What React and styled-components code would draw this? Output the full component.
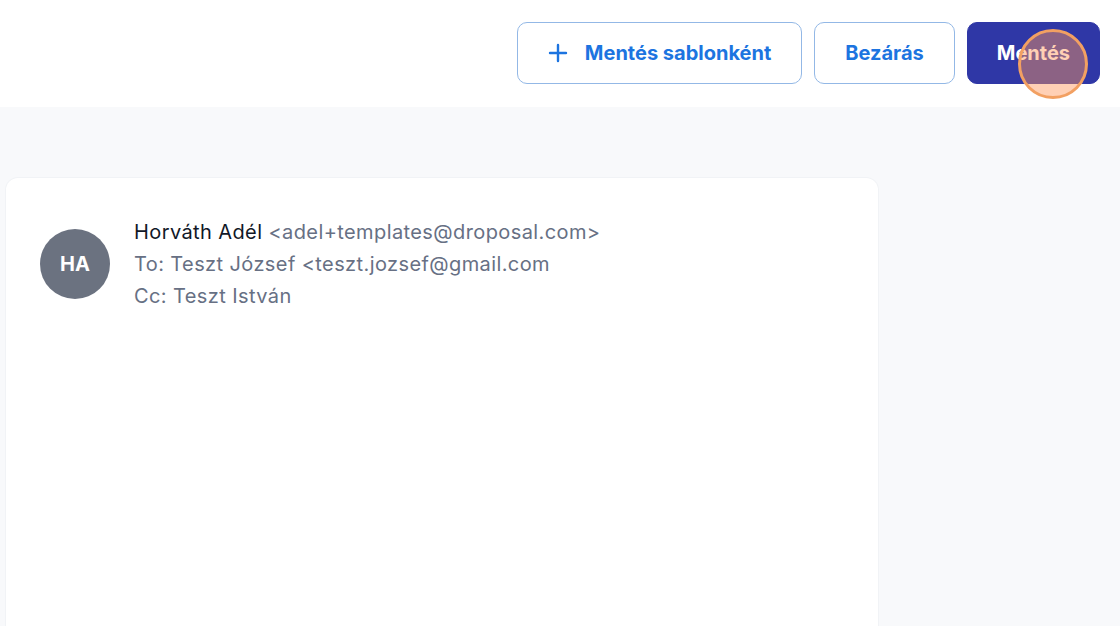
import styled, { createGlobalStyle, css } from "styled-components";

const GlobalStyle = createGlobalStyle`
  html, body {
    margin: 0;
    padding: 0;
    background: #f8f9fb;
    font-family: Inter, "Noto Sans", sans-serif;
    overflow: hidden;
  }
`;

const Page = styled.div`
  width: 1120px;
  height: 626px;
  display: flex;
  flex-direction: column;
  background: #f8f9fb;
  overflow: hidden;
`;

const Header = styled.header`
  height: 107px;
  flex-shrink: 0;
  background: #ffffff;
  display: flex;
  align-items: flex-start;
  justify-content: flex-end;
  gap: 12px;
  padding: 22px 20px 0 0;
  box-sizing: border-box;
`;

const outlined = css`
  background: #ffffff;
  color: #1c74e0;
  border: 1.5px solid #93b8e6;
`;

const filled = css`
  background: #2f37a6;
  color: #ffffff;
  border: 1.5px solid #2f37a6;
`;

const Button = styled.button`
  position: relative;
  height: 62px;
  box-sizing: border-box;
  padding: 0 ${(p) => p.$px || 29}px;
  border-radius: 10px;
  display: flex;
  align-items: center;
  gap: 17px;
  font-family: Inter, sans-serif;
  font-size: 20px;
  font-weight: 700;
  letter-spacing: 0;
  cursor: pointer;
  ${(p) => (p.$primary ? filled : outlined)}
`;

const Cursor = styled.span`
  position: absolute;
  left: 50px;
  top: 6px;
  width: 70px;
  height: 70px;
  border-radius: 50%;
  border: 3px solid #f2a062;
  background: rgba(255, 150, 90, 0.45);
  box-sizing: border-box;
  pointer-events: none;
`;

const Body = styled.main`
  flex: 1;
  padding: 71px 242px 0 6px;
`;

const Card = styled.section`
  height: 100%;
  background: #ffffff;
  border-radius: 12px 12px 0 0;
  box-shadow: 0 0 0 1px #f1f3f6;
  padding: 38px 34px;
  box-sizing: border-box;
`;

const Sender = styled.div`
  display: flex;
  align-items: center;
  gap: 24px;
`;

const Avatar = styled.div`
  width: 70px;
  height: 70px;
  border-radius: 50%;
  background: #6b7280;
  color: #ffffff;
  display: flex;
  align-items: center;
  justify-content: center;
  font-size: 20px;
  font-weight: 700;
  flex-shrink: 0;
`;

const Lines = styled.div`
  display: flex;
  flex-direction: column;
  font-size: 20px;
  line-height: 32px;
  letter-spacing: 0.4px;
  color: #677084;
`;

const Name = styled.span`
  color: #111827;
`;

const PlusIcon = () => (
  <svg width="20" height="20" viewBox="0 0 20 20" fill="none">
    <path d="M10 2v16M2 10h16" stroke="currentColor" strokeWidth="2.4" strokeLinecap="round" />
  </svg>
);

export default function App() {
  return (
    <>
      <GlobalStyle />
      <Page>
        <Header>
          <Button $px={30}>
            <PlusIcon />
            Mentés sablonként
          </Button>
          <Button $px={30}>Bezárás</Button>
          <Button $primary>
            Mentés
            <Cursor />
          </Button>
        </Header>
        <Body>
          <Card>
            <Sender>
              <Avatar>HA</Avatar>
              <Lines>
                <div>
                  <Name>Horváth Adél</Name> &lt;adel+templates@droposal.com&gt;
                </div>
                <div>To: Teszt József &lt;teszt.jozsef@gmail.com</div>
                <div>Cc: Teszt István</div>
              </Lines>
            </Sender>
          </Card>
        </Body>
      </Page>
    </>
  );
}
